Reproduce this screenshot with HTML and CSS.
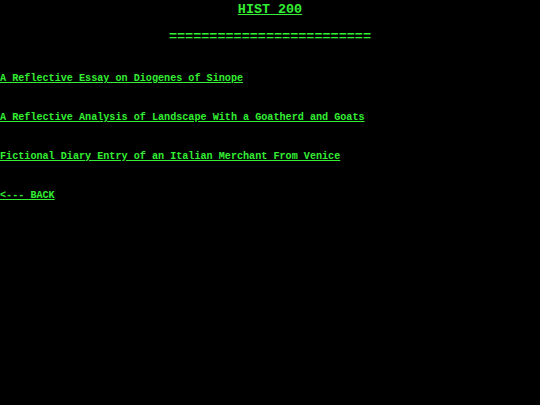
FILE: index.html
```html
<!DOCTYPE html>
<html>
<head>
<meta charset="utf-8">
<link rel="stylesheet" href="styles.css">
</head>
<body>
<header class="head">
  <a class="title" href="#">HIST 200</a>
  <div class="rule">=========================</div>
</header>
<nav class="links">
  <a class="link" href="#">A Reflective Essay on Diogenes of Sinope</a>
  <a class="link" href="#">A Reflective Analysis of Landscape With a Goatherd and Goats</a>
  <a class="link" href="#">Fictional Diary Entry of an Italian Merchant From Venice</a>
  <a class="link" href="#">&lt;--- BACK</a>
</nav>
</body>
</html>
```
FILE: styles.css
```css
html, body {
  margin: 0;
  padding: 0;
  background: #000;
}
body {
  color: #33ee33;
  font-family: "Liberation Mono", "Courier New", monospace;
  font-weight: bold;
  width: 540px;
  height: 405px;
}
.head {
  text-align: center;
}
.title {
  display: inline-block;
  font-size: 13.4px;
  line-height: 20px;
  color: #33ee33;
}
.rule {
  font-size: 13.47px;
  line-height: 14px;
  margin-top: 10px;
}
.links {
  display: flex;
  flex-direction: column;
  align-items: flex-start;
  gap: 27px;
  margin-top: 29px;
}
.link {
  font-size: 10.14px;
  line-height: 12px;
  color: #33ee33;
}
```
